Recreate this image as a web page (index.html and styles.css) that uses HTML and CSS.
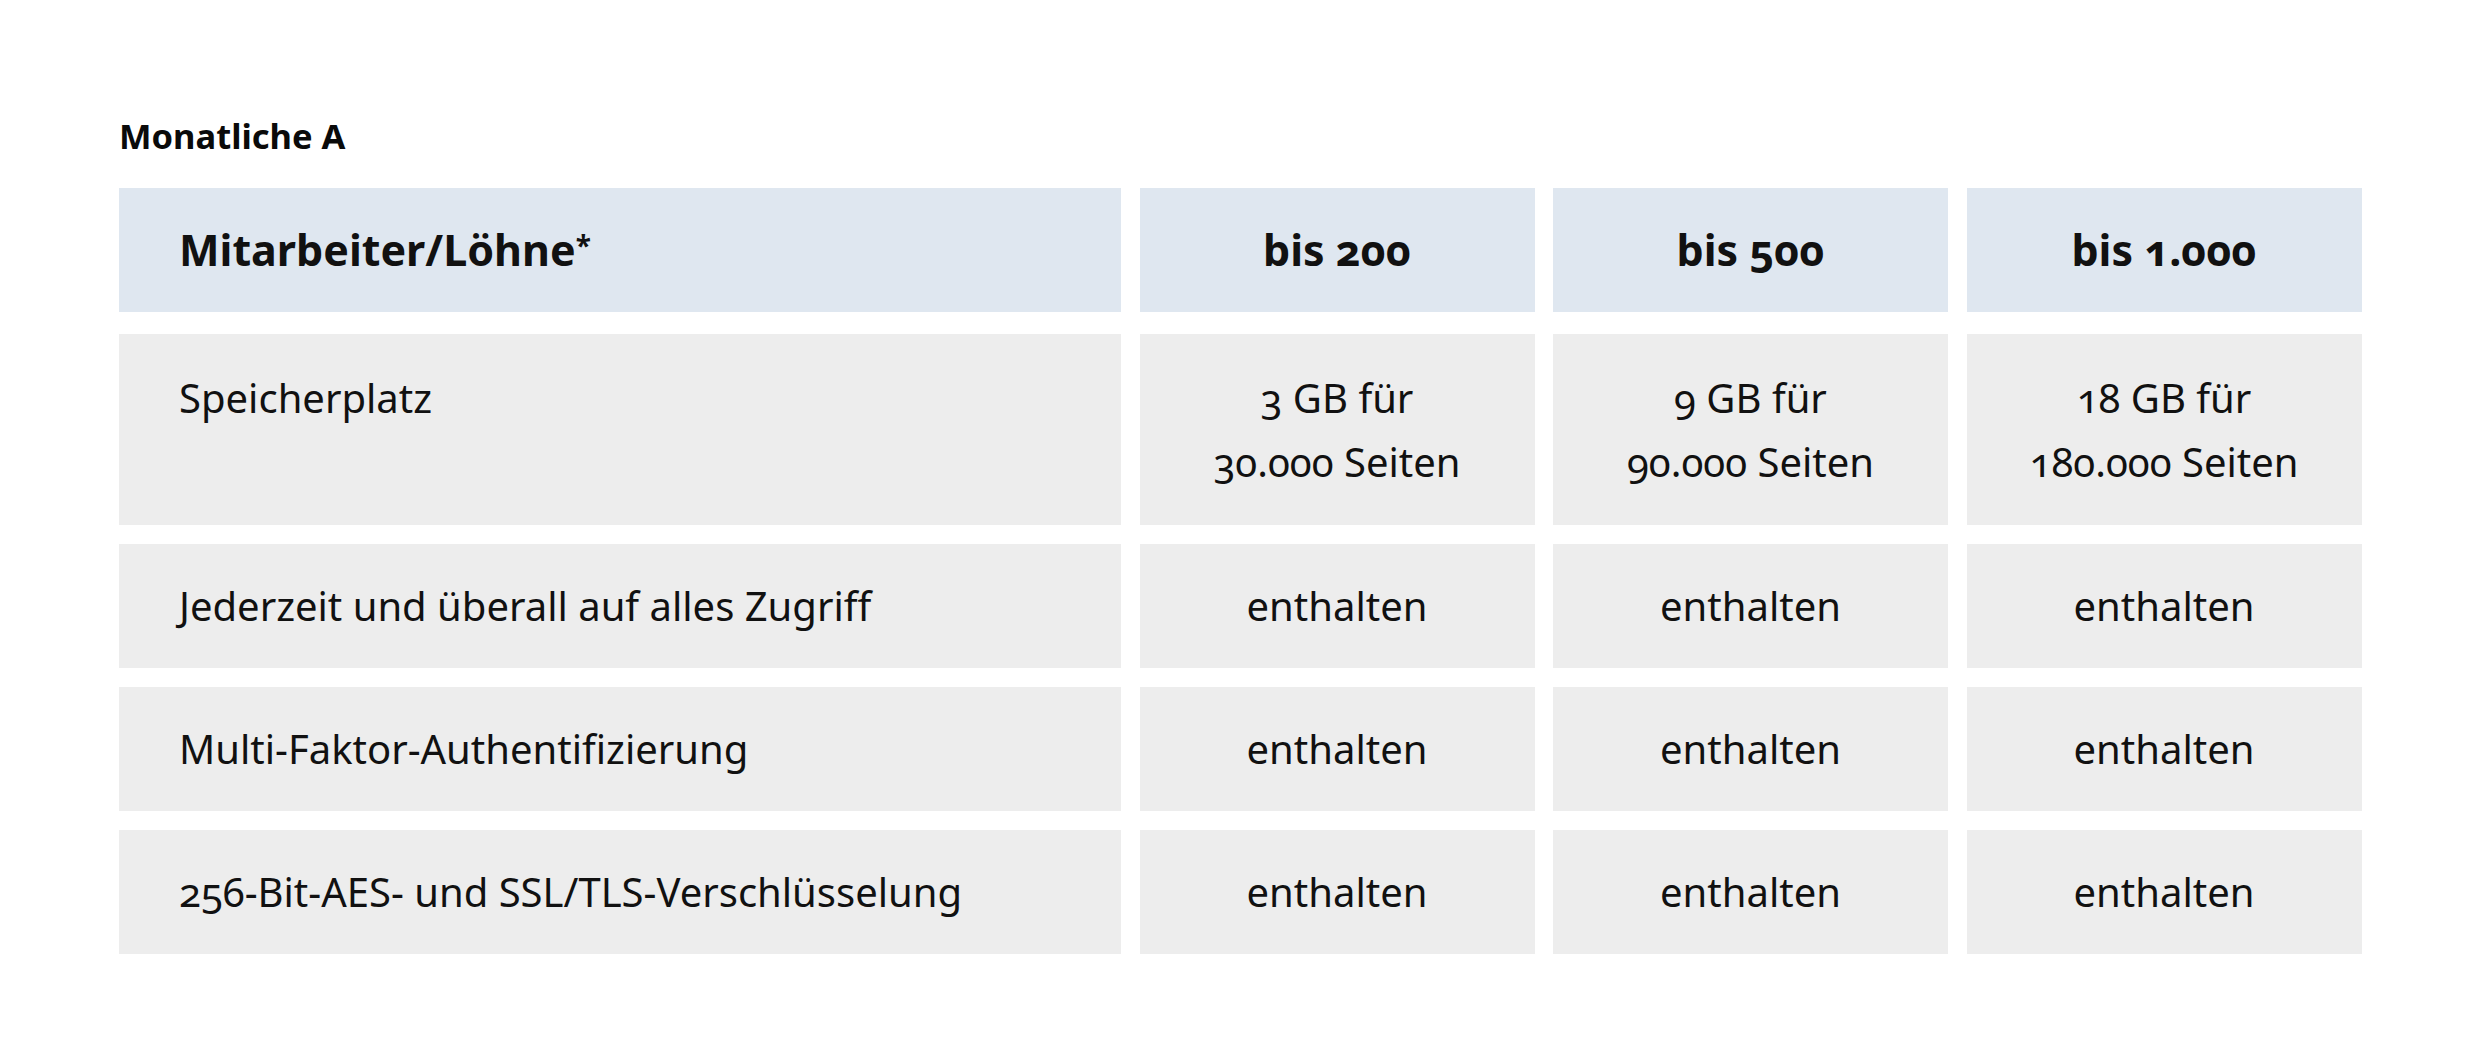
FILE: index.html
```html
<!DOCTYPE html>
<html lang="de">
<head>
<meta charset="utf-8">
<title>Monatliche A</title>
<link rel="stylesheet" href="styles.css">
</head>
<body>
<main class="page">
  <h2 class="title">Monatliche A</h2>
  <div class="grid">
    <div class="cell head label">Mitarbeiter/Löhne<span class="star">*</span></div>
    <div class="cell head">bis 200</div>
    <div class="cell head">bis 500</div>
    <div class="cell head">bis 1.000</div>

    <div class="cell label tall">Speicherplatz</div>
    <div class="cell tall">3 GB für<br>30.000 Seiten</div>
    <div class="cell tall">9 GB für<br>90.000 Seiten</div>
    <div class="cell tall">18 GB für<br>180.000 Seiten</div>

    <div class="cell label">Jederzeit und überall auf alles Zugriff</div>
    <div class="cell">enthalten</div>
    <div class="cell">enthalten</div>
    <div class="cell">enthalten</div>

    <div class="cell label">Multi-Faktor-Authentifizierung</div>
    <div class="cell">enthalten</div>
    <div class="cell">enthalten</div>
    <div class="cell">enthalten</div>

    <div class="cell label">256-Bit-AES- und SSL/TLS-Verschlüsselung</div>
    <div class="cell">enthalten</div>
    <div class="cell">enthalten</div>
    <div class="cell">enthalten</div>
  </div>
</main>
</body>
</html>
```

FILE: styles.css
```css
html, body {
  margin: 0;
  padding: 0;
  background: #ffffff;
}

body {
  font-family: "Noto Sans", "Open Sans", sans-serif;
  color: #111111;
  font-feature-settings: "onum" 1;
  font-variant-numeric: oldstyle-nums;
}

.page {
  padding: 116px 0 0 119px;
}

.title {
  margin: 0 0 32px 0;
  font-size: 34.5px;
  line-height: 40px;
  font-weight: 700;
  color: #0a0a0a;
}

.grid {
  display: grid;
  grid-template-columns: 1002px 395px 395px 395px;
  column-gap: 18.5px;
  row-gap: 19px;
  width: 2242.5px;
}

.cell {
  background: #ededed;
  padding: 30px 20px;
  font-size: 40px;
  line-height: 64px;
  text-align: center;
}

.cell.tall {
  padding-top: 31.5px;
  padding-bottom: 31.5px;
}

.cell.label {
  text-align: left;
  padding-left: 60px;
}

.cell.head {
  background: #dfe7f0;
  font-size: 43px;
  font-weight: 700;
  margin-bottom: 3px;
}

.star {
  font-size: 28px;
  vertical-align: 10px;
  line-height: 0;
}
```
